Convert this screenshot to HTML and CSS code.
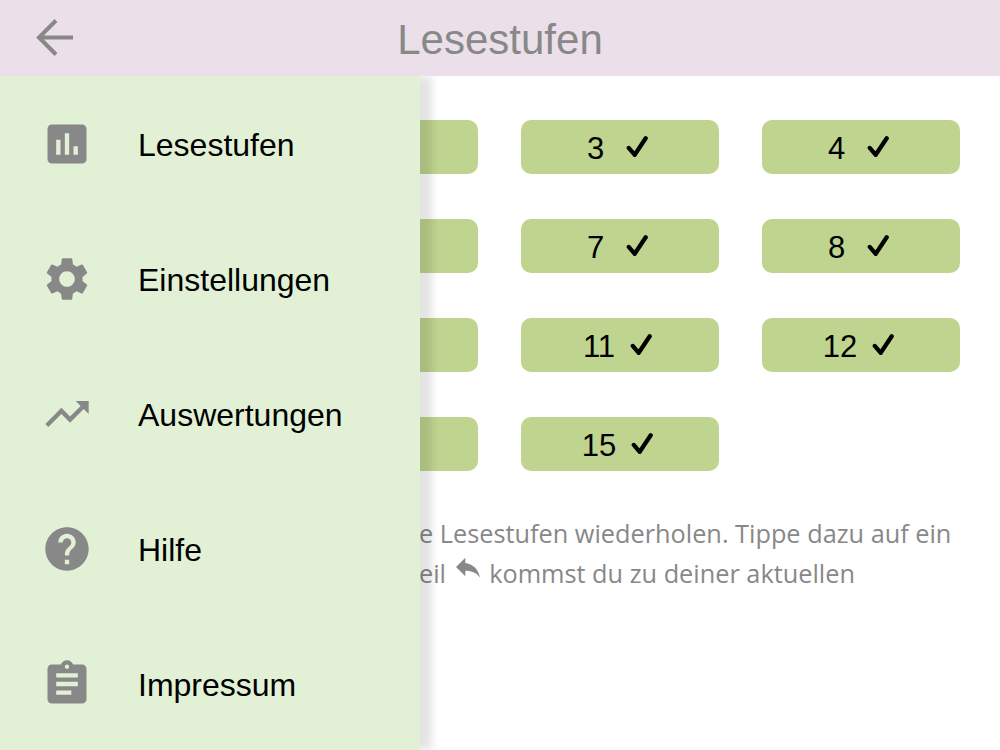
FILE: index.html
```html
<!DOCTYPE html>
<html lang="de">
<head>
<meta charset="UTF-8">
<meta name="viewport" content="width=device-width, initial-scale=1.0">
<link rel="stylesheet" href="styles.css">
<title>Lesestufen</title>
</head>
<body>

<header id="topbar">
  <button class="back" aria-label="Zurück">
    <svg width="44" height="44" viewBox="0 0 44 44"><path d="M40 21.500H7M23 4.500L6 21.500 23 38.500" fill="none" stroke="#888" stroke-width="4"/></svg>
  </button>
  <h1>Lesestufen</h1>
</header>

<main id="content">
  <div class="levels">
    <button class="level"><span>1</span><svg class="tick" viewBox="0 0 24 24"><path d="M3 13l6.500 7.500L21.500 2.500"/></svg></button>
    <button class="level"><span>2</span><svg class="tick" viewBox="0 0 24 24"><path d="M3 13l6.500 7.500L21.500 2.500"/></svg></button>
    <button class="level"><span>3</span><svg class="tick" viewBox="0 0 24 24"><path d="M3 13l6.500 7.500L21.500 2.500"/></svg></button>
    <button class="level"><span>4</span><svg class="tick" viewBox="0 0 24 24"><path d="M3 13l6.500 7.500L21.500 2.500"/></svg></button>
    <button class="level"><span>5</span><svg class="tick" viewBox="0 0 24 24"><path d="M3 13l6.500 7.500L21.500 2.500"/></svg></button>
    <button class="level"><span>6</span><svg class="tick" viewBox="0 0 24 24"><path d="M3 13l6.500 7.500L21.500 2.500"/></svg></button>
    <button class="level"><span>7</span><svg class="tick" viewBox="0 0 24 24"><path d="M3 13l6.500 7.500L21.500 2.500"/></svg></button>
    <button class="level"><span>8</span><svg class="tick" viewBox="0 0 24 24"><path d="M3 13l6.500 7.500L21.500 2.500"/></svg></button>
    <button class="level"><span>9</span><svg class="tick" viewBox="0 0 24 24"><path d="M3 13l6.500 7.500L21.500 2.500"/></svg></button>
    <button class="level"><span>10</span><svg class="tick" viewBox="0 0 24 24"><path d="M3 13l6.500 7.500L21.500 2.500"/></svg></button>
    <button class="level"><span>11</span><svg class="tick" viewBox="0 0 24 24"><path d="M3 13l6.500 7.500L21.500 2.500"/></svg></button>
    <button class="level"><span>12</span><svg class="tick" viewBox="0 0 24 24"><path d="M3 13l6.500 7.500L21.500 2.500"/></svg></button>
    <button class="level"><span>13</span><svg class="tick" viewBox="0 0 24 24"><path d="M3 13l6.500 7.500L21.500 2.500"/></svg></button>
    <button class="level"><span>14</span><svg class="tick" viewBox="0 0 24 24"><path d="M3 13l6.500 7.500L21.500 2.500"/></svg></button>
    <button class="level"><span>15</span><svg class="tick" viewBox="0 0 24 24"><path d="M3 13l6.500 7.500L21.500 2.500"/></svg></button>
  </div>

  <p class="hint">e Lesestufen wiederholen. Tippe dazu auf ein<br>eil <svg class="reply" viewBox="0 0 24 24"><path d="M10 9V5l-7 7 7 7v-4.100c5 0 8.500 1.600 11 5.100-1-5-4-10-11-11z"/></svg> kommst du zu deiner aktuellen</p>
</main>

<nav id="drawer">
  <a class="item" href="#">
    <svg class="icon" viewBox="0 0 24 24"><path d="M19 3H5c-1.100 0-2 .9-2 2v14c0 1.100.9 2 2 2h14c1.100 0 2-.9 2-2V5c0-1.100-.9-2-2-2zM9 17H7v-7h2v7zm4 0h-2V7h2v10zm4 0h-2v-4h2v4z"/></svg>
    <span>Lesestufen</span>
  </a>
  <a class="item" href="#">
    <svg class="icon" viewBox="0 0 24 24"><path d="M19.140 12.940c.04-.3.06-.61.06-.94 0-.32-.02-.64-.07-.94l2.030-1.580c.18-.14.23-.41.12-.61l-1.920-3.320c-.12-.22-.37-.29-.59-.22l-2.390.96c-.5-.38-1.030-.7-1.620-.94l-.36-2.540c-.04-.24-.24-.41-.48-.41h-3.840c-.24 0-.43.17-.47.41l-.36 2.540c-.59.24-1.130.57-1.620.94l-2.390-.96c-.22-.08-.47 0-.59.22L2.740 8.870c-.12.21-.08.47.12.61l2.030 1.580c-.05.3-.09.63-.09.94s.02.64.07.94l-2.030 1.580c-.18.14-.23.41-.12.61l1.920 3.320c.12.22.37.29.59.22l2.390-.96c.5.38 1.030.7 1.620.94l.36 2.540c.05.24.24.41.48.41h3.840c.24 0 .44-.17.47-.41l.36-2.540c.59-.24 1.130-.56 1.620-.94l2.390.96c.22.08.47 0 .59-.22l1.920-3.320c.12-.22.07-.47-.12-.61l-2.010-1.580zM12 15.600c-1.980 0-3.600-1.620-3.600-3.600s1.620-3.600 3.600-3.600 3.600 1.620 3.600 3.600-1.620 3.600-3.600 3.600z"/></svg>
    <span>Einstellungen</span>
  </a>
  <a class="item" href="#">
    <svg class="icon" viewBox="0 0 24 24"><path d="M16 6l2.290 2.290-4.880 4.880-4-4L2 16.590 3.410 18l6-6 4 4 6.300-6.290L22 12V6z"/></svg>
    <span>Auswertungen</span>
  </a>
  <a class="item" href="#">
    <svg class="icon" viewBox="0 0 24 24"><path d="M12 2C6.480 2 2 6.480 2 12s4.480 10 10 10 10-4.480 10-10S17.520 2 12 2zm1 17h-2v-2h2v2zm2.070-7.750l-.9.92C13.450 12.900 13 13.500 13 15h-2v-.5c0-1.100.45-2.100 1.170-2.830l1.240-1.260c.37-.36.59-.86.59-1.410 0-1.100-.9-2-2-2s-2 .9-2 2H8c0-2.210 1.790-4 4-4s4 1.790 4 4c0 .88-.36 1.680-.93 2.250z"/></svg>
    <span>Hilfe</span>
  </a>
  <a class="item" href="#">
    <svg class="icon" viewBox="0 0 24 24"><path d="M19 3h-4.180C14.400 1.840 13.300 1 12 1c-1.300 0-2.400.84-2.820 2H5c-1.100 0-2 .9-2 2v14c0 1.100.9 2 2 2h14c1.100 0 2-.9 2-2V5c0-1.100-.9-2-2-2zm-7 0c.55 0 1 .45 1 1s-.45 1-1 1-1-.45-1-1 .45-1 1-1zm2 14H7v-2h7v2zm3-4H7v-2h10v2zm0-4H7V7h10v2z"/></svg>
    <span>Impressum</span>
  </a>
</nav>

</body>
</html>
```

FILE: styles.css
```css
html, body {
  height: 100%;
}
body {
  margin: 0;
  overflow: hidden;
  font-family: "Liberation Sans", Arial, sans-serif;
  background-color: #fff;
}
#topbar {
  position: relative;
  z-index: 2;
  display: grid;
  grid-template-columns: 1fr auto 1fr;
  align-items: center;
  height: 76px;
  padding: 0 33px;
  background-color: #ebe0e9;
}
#topbar h1 {
  grid-column: 2;
  grid-row: 1;
  margin: 3px 0 0;
  font-size: 42px;
  font-weight: normal;
  color: #888;
}
.back {
  grid-column: 1;
  grid-row: 1;
  justify-self: start;
  display: flex;
  padding: 0;
  border: none;
  background: none;
}
#content {
  padding: 43.5px 39px 0;
}
.levels {
  display: grid;
  grid-template-columns: repeat(4, 198px);
  column-gap: 43px;
  row-gap: 44.5px;
}
.level {
  display: flex;
  align-items: center;
  justify-content: center;
  gap: 15px;
  height: 54.5px;
  padding: 0 5px 0 0;
  border: none;
  border-radius: 10px;
  background-color: #bfd48e;
  color: #000;
  font-family: inherit;
  font-size: 31px;
}
.level span {
  min-width: 24px;
  margin-top: 4px;
  text-align: left;
}
.tick {
  width: 22px;
  height: 24px;
  fill: none;
  stroke: #000;
  stroke-width: 4.6;
  stroke-linecap: round;
  stroke-linejoin: round;
}
.hint {
  margin: 42px 0 0;
  padding-left: 380px;
  font-family: "Open Sans", sans-serif;
  font-size: 25.3px;
  line-height: 40px;
  white-space: nowrap;
  color: #888;
}
.reply {
  width: 32px;
  height: 32px;
  margin: -16px -1px -16px -1px;
  fill: #888;
  vertical-align: 16px;
}
#drawer {
  position: absolute;
  z-index: 1;
  top: 76px;
  left: 0;
  bottom: 0;
  display: flex;
  flex-direction: column;
  width: 420px;
  background-color: #e2f1d6;
  box-shadow: 12px 0 8px rgba(0, 0, 0, 0.11);
}
.item {
  display: flex;
  align-items: center;
  flex: 0 0 135px;
  gap: 45px;
  padding-left: 41px;
  font-size: 32px;
  color: #000;
  text-decoration: none;
}
.item span {
  margin-top: 4px;
}
.icon {
  width: 52px;
  height: 52px;
  fill: #888;
}
```
